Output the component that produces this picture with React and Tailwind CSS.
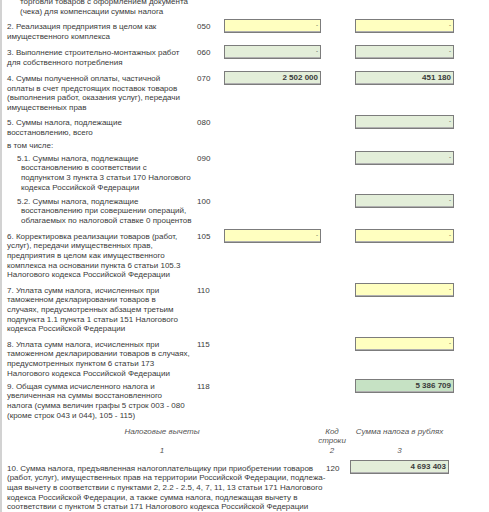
import React from "react";

function Field({ value = "-", tone = "yellow" }) {
  const bg =
    tone === "yellow" ? "bg-[#ffffc0]" : tone === "dark" ? "bg-[#c6e2c4]" : "bg-[#e3eed9]";
  const bold = value !== "-";
  return (
    <div
      className={`h-[14px] border border-[#7c7c7c] shadow-[inset_0_-1px_0_#b0b0b0] ${bg} flex items-center justify-end pr-[2px] ${
        bold ? "font-bold text-[8px]" : "text-[6px]"
      }`}
    >
      {value}
    </div>
  );
}

function Row({ className = "", code, f1, f2, indent, children }) {
  return (
    <div className={`flex items-start ${className}`}>
      <div className={`w-[190px] pt-[3px] ${indent ? "pl-[10px]" : ""}`}>{children}</div>
      <div className="w-[20px] pt-[3px]">{code}</div>
      <div className="w-[97px] ml-[7px]">{f1}</div>
      <div className="w-[99px] ml-[34px]">{f2}</div>
    </div>
  );
}

function Lines({ items, hang }) {
  return items.map((t, i) => (
    <div key={i} className={`whitespace-nowrap ${hang && i > 0 ? "pl-[4px]" : ""}`}>
      {t}
    </div>
  ));
}

export default function App() {
  return (
    <div
      className="h-[512px] overflow-hidden bg-white border-l-2 border-[#d2d2d2] pl-[5px] text-[8px] leading-[9.6px] text-[#3a3a3a]"
      style={{ fontFamily: '"Liberation Sans", Arial, sans-serif' }}
    >
      {/* continuation of line 1 */}
      <div className="mt-[-3px] pl-[13px]">
        <div>торговли товаров с оформлением документа</div>
        <div>(чека) для компенсации суммы налога</div>
      </div>

      <Row className="mt-[2.8px]" code="050" f1={<Field />} f2={<Field />}>
        <Lines items={["2. Реализация предприятия в целом как", "имущественного комплекса"]} />
      </Row>
      <Row className="mt-[3.8px]" code="060" f1={<Field tone="green" />} f2={<Field tone="green" />}>
        <Lines items={["3. Выполнение строительно-монтажных работ", "для собственного потребления"]} />
      </Row>
      <Row
        className="mt-[3.8px]"
        code="070"
        f1={<Field tone="green" value="2 502 000" />}
        f2={<Field tone="green" value="451 180" />}
      >
        <Lines
          items={[
            "4. Суммы полученной оплаты, частичной",
            "оплаты в счет предстоящих поставок товаров",
            "(выполнения работ, оказания услуг), передачи",
            "имущественных прав",
          ]}
        />
      </Row>
      <Row className="mt-[2.6px]" code="080" f2={<Field tone="green" />}>
        <Lines items={["5. Суммы налога, подлежащие", "восстановлению, всего"]} />
      </Row>
      <div className="mt-[4px]">в том числе:</div>
      <Row className="mt-[0.2px]" code="090" indent f2={<Field tone="green" />}>
        <Lines
          hang
          items={[
            "5.1. Суммы налога, подлежащие",
            "восстановлению в соответствии с",
            "подпунктом 3 пункта 3 статьи 170 Налогового",
            "кодекса Российской Федерации",
          ]}
        />
      </Row>
      <Row className="mt-[1.6px]" code="100" indent f2={<Field tone="green" />}>
        <Lines
          hang
          items={[
            "5.2. Суммы налога, подлежащие",
            "восстановлению при совершении операций,",
            "облагаемых по налоговой ставке 0 процентов",
          ]}
        />
      </Row>
      <Row className="mt-[3.2px]" code="105" f1={<Field />} f2={<Field />}>
        <Lines
          items={[
            "6. Корректировка реализации товаров (работ,",
            "услуг), передачи имущественных прав,",
            "предприятия в целом как имущественного",
            "комплекса на основании пункта 6 статьи 105.3",
            "Налогового кодекса Российской Федерации",
          ]}
        />
      </Row>
      <Row className="mt-[3px]" code="110" f2={<Field />}>
        <Lines
          items={[
            "7. Уплата сумм налога, исчисленных при",
            "таможенном декларировании товаров в",
            "случаях, предусмотренных абзацем третьим",
            "подпункта 1.1 пункта 1 статьи 151 Налогового",
            "кодекса Российской Федерации",
          ]}
        />
      </Row>
      <Row className="mt-[3px]" code="115" f2={<Field />}>
        <Lines
          items={[
            "8. Уплата сумм налога, исчисленных при",
            "таможенном декларировании товаров в случаях,",
            "предусмотренных пунктом 6 статьи 173",
            "Налогового кодекса Российской Федерации",
          ]}
        />
      </Row>
      <Row className="mt-[0.6px]" code="118" f2={<Field tone="dark" value="5 386 709" />}>
        <Lines
          items={[
            "9. Общая сумма исчисленного налога и",
            "увеличенная на суммы восстановленного",
            "налога (сумма величин графы 5 строк 003 - 080",
            "(кроме строк 043 и 044), 105 - 115)",
          ]}
        />
      </Row>

      {/* section header */}
      <div className="flex mt-[6.5px] italic text-[#555]">
        <div className="w-[310px] text-center">
          <div>Налоговые вычеты</div>
          <div className="mt-[9.6px]">1</div>
        </div>
        <div className="w-[30px] text-center">
          <div>Код</div>
          <div>строки</div>
          <div>2</div>
        </div>
        <div className="w-[99px] ml-[3px] text-center">
          <div>Сумма налога в рублях</div>
          <div className="mt-[9.6px]">3</div>
        </div>
      </div>

      <div className="flex items-start mt-[4.3px]">
        <div className="w-[313px] pt-[4.2px]">
          <Lines
            items={[
              "10. Сумма налога, предъявленная налогоплательщику при приобретении товаров",
              "(работ, услуг), имущественных прав на территории Российской Федерации, подлежа-",
              "щая вычету в соответствии с пунктами 2, 2.2 - 2.5, 4, 7, 11, 13 статьи 171 Налогового",
              "кодекса Российской Федерации, а также сумма налога, подлежащая вычету в",
              "соответствии с пунктом 5 статьи 171 Налогового кодекса Российской Федерации",
            ]}
          />
        </div>
        <div className="w-[30px] pt-[4.2px] pl-[6px]">120</div>
        <div className="w-[99px]">
          <Field tone="green" value="4 693 403" />
        </div>
      </div>
    </div>
  );
}
